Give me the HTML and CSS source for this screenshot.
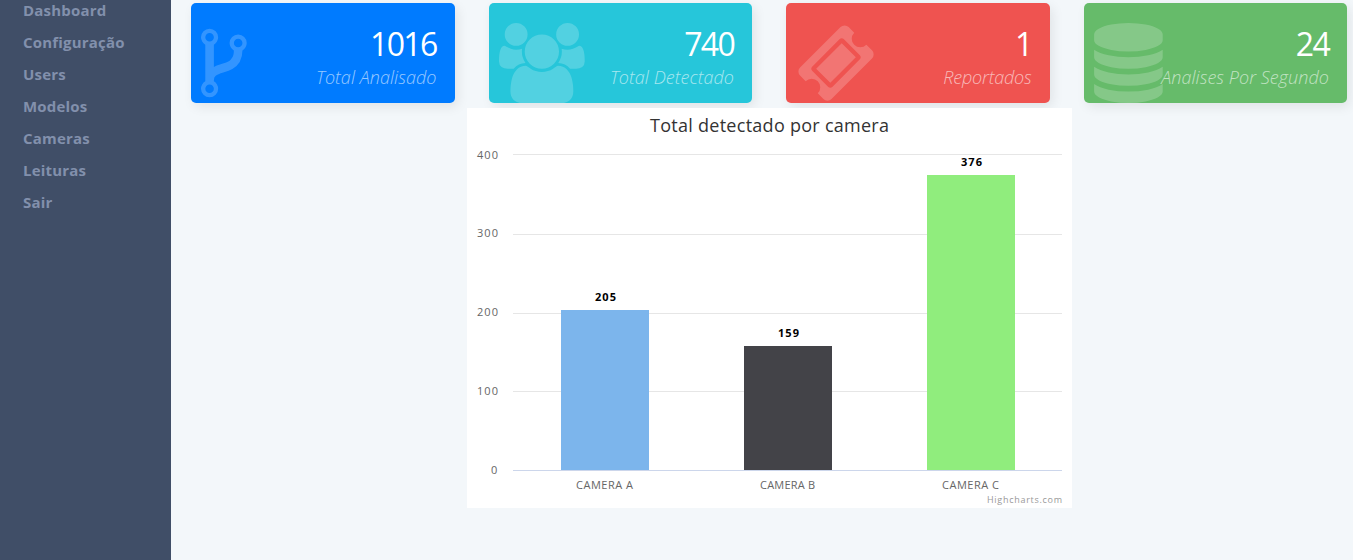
FILE: index.html
```html
<!DOCTYPE html>
<html lang="pt">
<head>
<meta charset="utf-8">
<title>Dashboard</title>
<link rel="stylesheet" href="styles.css">
</head>
<body>
<div class="layout">
  <nav class="sidebar">
    <a class="link">Dashboard</a>
    <a class="link">Configuração</a>
    <a class="link">Users</a>
    <a class="link">Modelos</a>
    <a class="link">Cameras</a>
    <a class="link">Leituras</a>
    <a class="link">Sair</a>
  </nav>
  <main class="content">
    <section class="cards">
      <article class="card blue">
        <svg class="icon" width="46" height="80" viewBox="384 0 1030 1792"><path d="M672 1472q0-40-28-68t-68-28-68 28-28 68 28 68 68 28 68-28 28-68zm0-1152q0-40-28-68t-68-28-68 28-28 68 28 68 68 28 68-28 28-68zm640 128q0-40-28-68t-68-28-68 28-28 68 28 68 68 28 68-28 28-68zm96 0q0 52-26 96.5t-70 69.5q-2 287-226 414-67 38-203 81-128 40-169.5 71t-41.5 100v26q44 25 70 69.5t26 96.5q0 80-56 136t-136 56-136-56-56-136q0-52 26-96.5t70-69.5v-820q-44-25-70-69.5t-26-96.5q0-80 56-136t136-56 136 56 56 136q0 52-26 96.5t-70 69.5v497q54-26 154-57 55-17 87.5-29.5t70.5-31 59-39.5 40.5-51 28-69.5 8.5-91.5q-44-25-70-69.5t-26-96.5q0-80 56-136t136-56 136 56 56 136z"/></svg>
        <div class="info"><span class="value">1016</span><span class="name">Total Analisado</span></div>
      </article>
      <article class="card cyan">
        <svg class="icon" width="86" height="80" viewBox="0 0 1926 1792"><path d="M593 896q-162 5-265 128h-134q-82 0-138-40.5t-56-118.5q0-353 124-353 6 0 43.5 21t97.5 42.5 119 21.5q67 0 133-23-5 37-5 66 0 139 81 256zm1071 637q0 120-73 189.5t-194 69.5h-874q-121 0-194-69.5t-73-189.5q0-53 3.5-103.5t14-109 26.5-108.5 43-97.5 62-81 85.5-53.5 111.5-20q10 0 43 21.5t73 48 107 48 135 21.5 135-21.5 107-48 73-48 43-21.5q61 0 111.5 20t85.5 53.5 62 81 43 97.5 26.5 108.5 14 109 3.5 103.5zm-1024-1277q0 106-75 181t-181 75-181-75-75-181 75-181 181-75 181 75 75 181zm704 384q0 159-112.5 271.5t-271.5 112.5-271.5-112.5-112.5-271.5 112.5-271.5 271.5-112.5 271.5 112.5 112.5 271.5zm576 225q0 78-56 118.5t-138 40.5h-134q-103-123-265-128 81-117 81-256 0-29-5-66 66 23 133 23 59 0 119-21.5t97.5-42.5 43.5-21q124 0 124 353zm-128-609q0 106-75 181t-181 75-181-75-75-181 75-181 181-75 181 75 75 181z"/></svg>
        <div class="info"><span class="value">740</span><span class="name">Total Detectado</span></div>
      </article>
      <article class="card red">
        <svg class="icon" width="80" height="80" viewBox="0 0 1792 1792"><path d="M1024 452l316 316-572 572-316-316zm-211 979l618-618q19-19 19-45t-19-45l-362-362q-18-18-45-18t-45 18l-618 618q-19 19-19 45t19 45l362 362q18 18 45 18t45-18zm889-637l-907 908q-37 37-90.5 37t-90.5-37l-126-126q56-56 56-136t-56-136-136-56-136 56l-125-126q-37-37-37-90.5t37-90.5l907-906q37-37 90.5-37t90.5 37l125 125q-56 56-56 136t56 136 136 56 136-56l126 125q37 37 37 90.5t-37 90.5z"/></svg>
        <div class="info"><span class="value">1</span><span class="name tight">Reportados</span></div>
      </article>
      <article class="card green">
        <svg class="icon" width="69" height="80" viewBox="128 0 1540 1792"><path d="M896 768q237 0 443-43t325-127v170q0 69-103 128t-280 93.5-385 34.5-385-34.5-280-93.5-103-128v-170q119 84 325 127t443 43zm0 768q237 0 443-43t325-127v170q0 69-103 128t-280 93.5-385 34.5-385-34.5-280-93.5-103-128v-170q119 84 325 127t443 43zm0-384q237 0 443-43t325-127v170q0 69-103 128t-280 93.5-385 34.5-385-34.5-280-93.5-103-128v-170q119 84 325 127t443 43zm0-1152q208 0 385 34.5t280 93.5 103 128v128q0 69-103 128t-280 93.5-385 34.5-385-34.5-280-93.5-103-128v-128q0-69 103-128t280-93.5 385-34.5z"/></svg>
        <div class="info"><span class="value">24</span><span class="name">Analises Por Segundo</span></div>
      </article>
    </section>
    <svg class="chart" width="605" height="400" viewBox="0 0 605 400">
      <text class="title" x="183" y="24" textLength="239">Total detectado por camera</text>
      <path class="grid" d="M46 46.5H595M46 126.5H595M46 205.5H595M46 283.5H595"/>
      <g shape-rendering="crispEdges">
        <rect x="94" y="202" width="88" height="160" fill="#7cb5ec"/>
        <rect x="277" y="238" width="88" height="124" fill="#434348"/>
        <rect x="460" y="67" width="88" height="295" fill="#90ed7d"/>
      </g>
      <path class="axis" d="M46 362.5H595"/>
      <g class="tick">
        <text x="10" y="51" textLength="21">400</text>
        <text x="10" y="129" textLength="21">300</text>
        <text x="10" y="208" textLength="21">200</text>
        <text x="10" y="287" textLength="21">100</text>
        <text x="24" y="366" textLength="7">0</text>
        <text x="109" y="381" textLength="57">CAMERA A</text>
        <text x="293" y="381" textLength="55">CAMERA B</text>
        <text x="475" y="381" textLength="57">CAMERA C</text>
      </g>
      <g class="datum">
        <text x="128" y="193" textLength="21">205</text>
        <text x="311" y="229" textLength="21">159</text>
        <text x="494" y="58" textLength="21">376</text>
      </g>
      <text class="credit" x="520" y="395" textLength="75">Highcharts.com</text>
    </svg>
  </main>
</div>
</body>
</html>
```
FILE: styles.css
```css
* { box-sizing: border-box; }
body {
  margin: 0;
  background: #f3f7fa;
  font-family: "Open Sans", "Noto Sans", sans-serif;
  overflow: hidden;
}
.layout { display: flex; height: 560px; }
.sidebar {
  flex: none;
  display: flex;
  flex-direction: column;
  width: 171px;
  padding-left: 23px;
  background: #404e67;
}
.link {
  height: 32px;
  line-height: 20px;
  font-size: 15px;
  font-weight: 700;
  letter-spacing: 0.2px;
  color: #8290ac;
}
.content {
  flex: 1;
  display: flex;
  flex-direction: column;
  align-items: center;
  padding: 3px 6px 0 20px;
}
.cards {
  display: grid;
  grid-template-columns: repeat(4, 1fr);
  gap: 34px;
  width: 100%;
}
.card {
  display: flex;
  justify-content: space-between;
  height: 100px;
  padding: 20px 18px 0 10px;
  border-radius: 5px;
  box-shadow: 3px 4px 12px rgba(0, 0, 0, 0.08);
  color: #fff;
}
.blue { background: #007bff; }
.cyan { background: #26c6da; }
.red { background: #ef5350; }
.green { background: #66bb6a; }
.icon { flex: none; fill: #fff; opacity: 0.2; }
.info {
  display: flex;
  flex-direction: column;
  align-items: flex-end;
  width: 0;
  flex: 1;
  white-space: nowrap;
}
.value {
  height: 41px;
  line-height: 42px;
  font-size: 32px;
  letter-spacing: -1.7px;
}
.name {
  line-height: 26px;
  font-size: 18px;
  font-style: italic;
  font-weight: 300;
  letter-spacing: 0.05px;
  color: rgba(255, 255, 255, 0.6);
}
.tight { letter-spacing: -0.2px; }
.chart {
  flex: none;
  margin: 5px 0 0 1px;
  background: #fff;
}
.title { font-size: 18px; fill: #333; }
.grid { stroke: #e6e6e6; fill: none; }
.axis { stroke: #ccd6eb; fill: none; }
.tick { font-size: 11px; fill: #666; }
.datum { font-size: 11px; font-weight: 700; fill: #000; }
.credit { font-size: 9px; fill: #999; }
```
